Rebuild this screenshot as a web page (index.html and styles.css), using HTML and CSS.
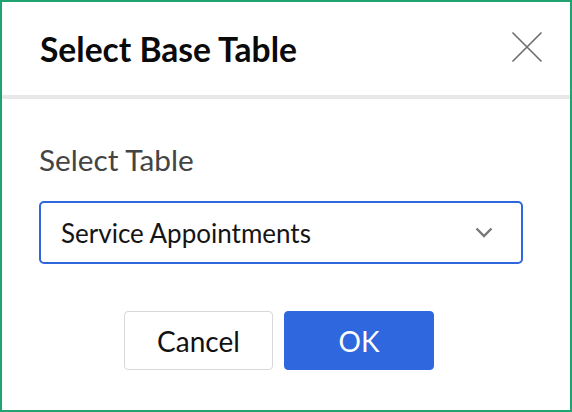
FILE: index.html
```html
<!DOCTYPE html>
<html>
<head>
<meta charset="utf-8">
<link rel="stylesheet" href="styles.css">
</head>
<body>
<div class="dialog">
  <div class="header">
    <h1 class="title">Select Base Table</h1>
    <button class="close" aria-label="Close">
      <svg width="32" height="32" viewBox="0 0 32 32"><path d="M1.5 1.5 L30.5 30.5 M30.5 1.5 L1.5 30.5" stroke="#6b6b6b" stroke-width="1.6" fill="none"/></svg>
    </button>
  </div>
  <div class="body">
    <div class="label">Select Table</div>
    <div class="select">
      <span class="select-text">Service Appointments</span>
      <svg class="chevron" width="18" height="11" viewBox="0 0 18 11"><path d="M1.5 1.5 L9 9 L16.5 1.5" stroke="#777" stroke-width="2.4" fill="none"/></svg>
    </div>
    <div class="actions">
      <button class="btn btn-cancel">Cancel</button>
      <button class="btn btn-ok">OK</button>
    </div>
  </div>
</div>
</body>
</html>
```
FILE: styles.css
```css
* { box-sizing: border-box; }
html, body { margin: 0; padding: 0; }
body {
  font-family: Lato, "Liberation Sans", sans-serif;
  background: #fff;
}
.dialog {
  width: 572px;
  height: 412px;
  border: 2px solid #20a370;
  background: #fff;
  display: flex;
  flex-direction: column;
}
.header {
  height: 97px;
  border-bottom: 4px solid #e8e8e8;
  display: flex;
  align-items: center;
  justify-content: space-between;
  padding: 0 27px 0 38px;
}
.title {
  margin: 0;
  font-size: 33.6px;
  font-weight: 700;
  color: #0a0a0a;
}
.close {
  border: 0;
  background: none;
  padding: 0;
  width: 32px;
  height: 32px;
  display: block;
  margin-top: -4px;
}
.close svg { display: block; }
.body {
  padding: 44px 47px 0 37px;
}
.label {
  font-size: 29.8px;
  color: #444;
  line-height: 34px;
}
.select {
  margin-top: 24px;
  height: 63px;
  border: 2px solid #2d67db;
  border-radius: 5px;
  display: flex;
  align-items: center;
  justify-content: space-between;
  padding: 0 28px 0 20px;
}
.select-text {
  font-size: 26px;
  color: #151515;
}
.chevron { display: block; }
.actions {
  display: flex;
  justify-content: center;
  gap: 11px;
  margin-top: 47px;
  padding-right: 4px;
}
.btn {
  width: 149px;
  height: 59px;
  border-radius: 4px;
  font-family: Lato, "Liberation Sans", sans-serif;
  font-size: 28px;
  cursor: pointer;
}
.btn-cancel {
  background: #fff;
  border: 1px solid #d8d8d8;
  color: #111;
}
.btn-ok {
  width: 150px;
  background: #2f67de;
  border: 1px solid #2f67de;
  color: #fff;
}
```
